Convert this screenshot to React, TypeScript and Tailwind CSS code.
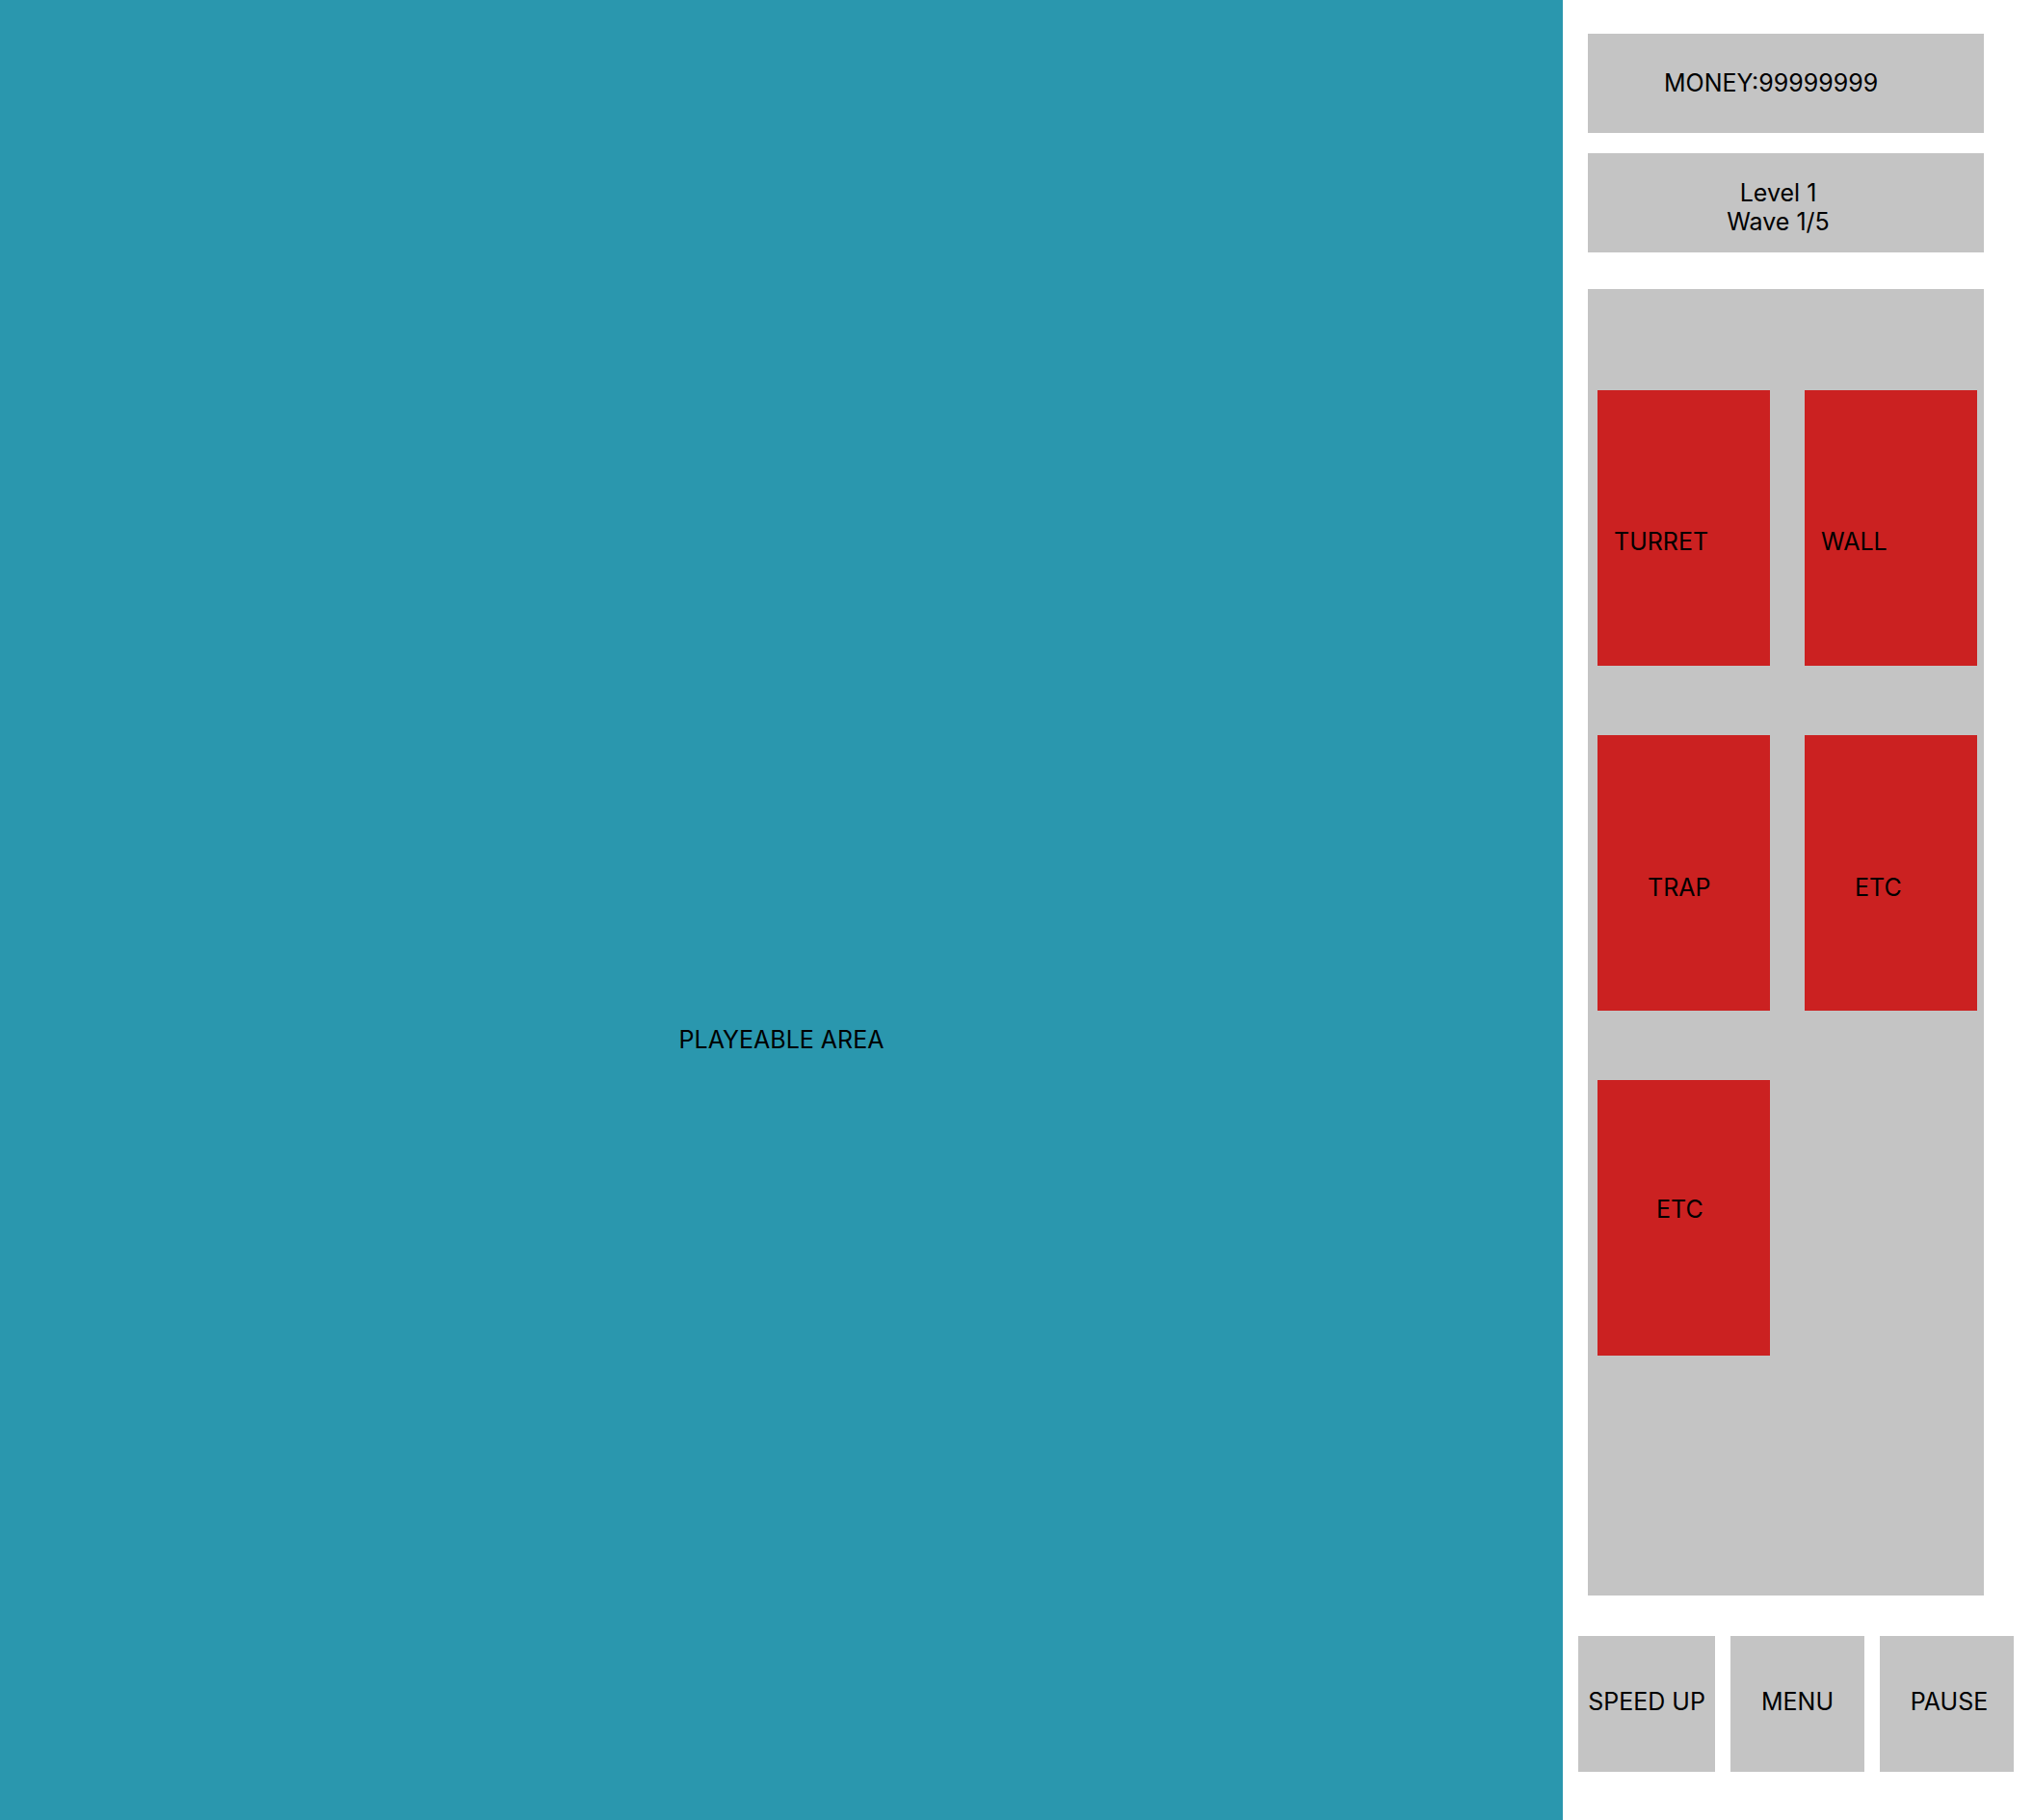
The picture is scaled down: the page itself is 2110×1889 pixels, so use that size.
import React from "react";

const cardBase = "w-[179px] h-[286px] bg-[#cb2121] text-[25px] leading-[30px] text-black";

export default function App() {
  return (
    <div
      className="flex w-[2110px] h-[1889px] bg-white text-black"
      style={{ fontFamily: "Inter, 'Noto Sans', sans-serif" }}
    >
      <div className="w-[1622px] h-full bg-[#2a97ae] flex justify-center pt-[1064px]">
        <span className="text-[25px] leading-[30px] h-[30px]">PLAYEABLE AREA</span>
      </div>
      <div className="flex-1 flex flex-col pt-[35px]">
        <div className="ml-[26px] w-[411px] h-[103px] bg-[#c4c4c4] pl-[79px] pt-[36px] text-[25px] leading-[30px]">
          MONEY:99999999
        </div>
        <div className="ml-[26px] mt-[21px] w-[411px] h-[103px] bg-[#c4c4c4] pt-[26px] pr-[16px] text-center text-[25px] leading-[30px]">
          <div>Level 1</div>
          <div>Wave 1/5</div>
        </div>
        <div className="ml-[26px] mt-[38px] w-[411px] h-[1356px] bg-[#c4c4c4] pt-[105px] pl-[10px]">
          <div className="grid grid-cols-[179px_179px] gap-x-[36px] gap-y-[72px]">
            <div className={`${cardBase} pl-[17px] pt-[142px]`}>TURRET</div>
            <div className={`${cardBase} pl-[17px] pt-[142px]`}>WALL</div>
            <div className={`${cardBase} pl-[52px] pt-[143px]`}>TRAP</div>
            <div className={`${cardBase} pl-[52px] pt-[143px]`}>ETC</div>
            <div className={`${cardBase} pl-[61px] pt-[119px]`}>ETC</div>
          </div>
        </div>
        <div className="ml-[16px] mt-[42px] flex gap-[16px]">
          <div className="w-[142px] h-[141px] bg-[#c4c4c4] flex items-center justify-center pb-[5px] text-[25px] leading-[30px]">
            SPEED UP
          </div>
          <div className="w-[139px] h-[141px] bg-[#c4c4c4] flex items-center justify-center pb-[5px] text-[25px] leading-[30px]">
            MENU
          </div>
          <div className="w-[139px] h-[141px] bg-[#c4c4c4] flex items-center justify-center pb-[5px] pl-[5px] text-[25px] leading-[30px]">
            PAUSE
          </div>
        </div>
      </div>
    </div>
  );
}
